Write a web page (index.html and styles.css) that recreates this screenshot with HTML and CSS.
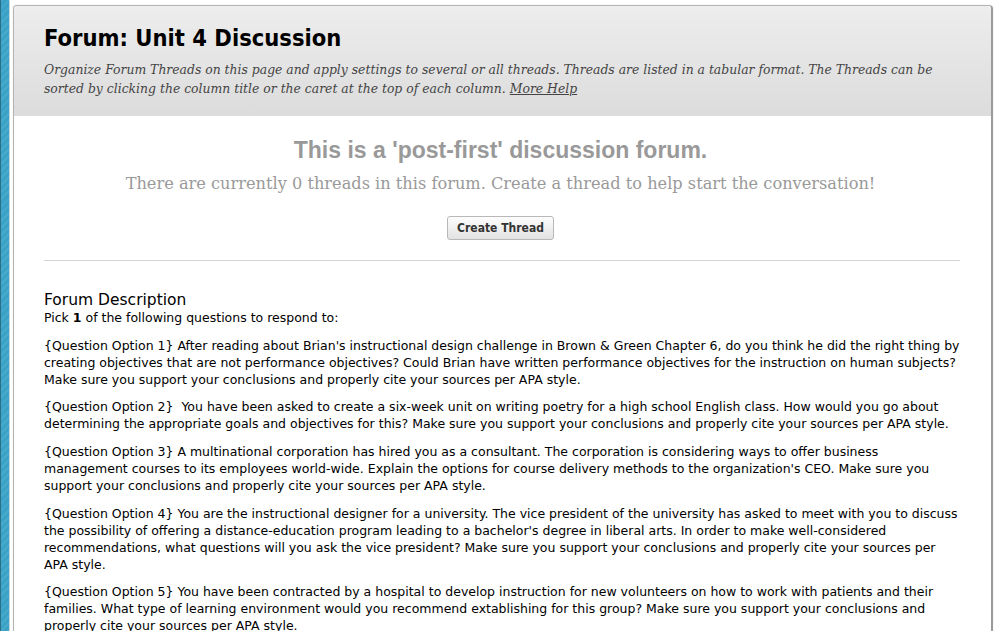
FILE: index.html
```html
<!DOCTYPE html>
<html lang="en">
<head>
    <meta charset="UTF-8">
    <title>Forum: Unit 4 Discussion</title>
    <link rel="stylesheet" href="styles.css">
</head>
<body>
    <div class="stripe"></div>
    <div class="panel">
        <div class="header">
            <h1>Forum: Unit 4 Discussion</h1>
            <p class="help">Organize Forum Threads on this page and apply settings to several or all threads. Threads are listed in a tabular format. The Threads can be sorted by clicking the column title or the caret at the top of each column. <a href="#">More Help</a></p>
        </div>

        <div class="content">
            <div class="empty">
                <h2>This is a 'post-first' discussion forum.</h2>
                <p>There are currently 0 threads in this forum. Create a thread to help start the conversation!</p>
                <button class="btn">Create Thread</button>
            </div>

            <div class="description">
                <h3>Forum Description</h3>
                <p class="pick">Pick <b>1</b> of the following questions to respond to:</p>
                <p>{Question Option 1} After reading about Brian's instructional design challenge in Brown &amp; Green Chapter 6, do you think he did the right thing by creating objectives that are not performance objectives? Could Brian have written performance objectives for the instruction on human subjects? Make sure you support your conclusions and properly cite your sources per APA style.</p>
                <p>{Question Option 2}&nbsp; You have been asked to create a six-week unit on writing poetry for a high school English class. How would you go about determining the appropriate goals and objectives for this? Make sure you support your conclusions and properly cite your sources per APA style.</p>
                <p>{Question Option 3} A multinational corporation has hired you as a consultant. The corporation is considering ways to offer business management courses to its employees world-wide. Explain the options for course delivery methods to the organization's CEO. Make sure you support your conclusions and properly cite your sources per APA style.</p>
                <p>{Question Option 4} You are the instructional designer for a university. The vice president of the university has asked to meet with you to discuss the possibility of offering a distance-education program leading to a bachelor's degree in liberal arts. In order to make well-considered recommendations, what questions will you ask the vice president? Make sure you support your conclusions and properly cite your sources per APA style.</p>
                <p>{Question Option 5} You have been contracted by a hospital to develop instruction for new volunteers on how to work with patients and their families. What type of learning environment would you recommend extablishing for this group? Make sure you support your conclusions and properly cite your sources per APA style.</p>
            </div>
        </div>
    </div>
</body>
</html>
```

FILE: styles.css
```css
body {
    margin: 0;
    background-color: #fff;
    font-family: "DejaVu Sans", sans-serif;
    display: flex;
    align-items: flex-start;
    height: 631px;
    overflow: hidden;
}

.stripe {
    width: 8px;
    height: 631px;
    flex-shrink: 0;
    border-left: 1px solid #2a6f88;
    border-right: 1px solid #c8d6dc;
    background-color: #39a2c6;
    background-image: repeating-linear-gradient(135deg, rgba(255, 255, 255, 0.08) 0 2px, transparent 2px 5px);
}

.panel {
    margin: 5px 0 0 3px;
    width: 977px;
    min-height: 700px;
    border: 1px solid #b4b4b4;
    border-right: 2px solid #9a9a9a;
    border-radius: 4px 4px 0 0;
    background-color: #fff;
    box-shadow: 0 0 2px rgba(0, 0, 0, 0.1);
}

.header {
    padding: 17px 30px 0 30px;
    height: 93px;
    background: linear-gradient(#ededed, #dcdcdc);
    border-radius: 4px 4px 0 0;
}

.header h1 {
    margin: 0;
    font-family: "DejaVu Sans Condensed", "DejaVu Sans", sans-serif;
    font-size: 23.5px;
    font-weight: bold;
    color: #000;
    line-height: 31px;
}

.help {
    margin: 6px 0 0 0;
    font-family: "DejaVu Serif", serif;
    font-style: italic;
    font-size: 12.4px;
    line-height: 19px;
    color: #444;
}

.help a {
    color: #444;
}

.content {
    padding: 0 28px 0 30px;
}

.empty {
    text-align: center;
    padding: 20px 3px 20px 0;
    border-bottom: 1px solid #d4d4d4;
    margin-right: 3px;
}

.empty h2 {
    margin: 0;
    font-family: "Liberation Sans", Arial, sans-serif;
    font-size: 23px;
    line-height: 28px;
    color: #999;
}

.empty p {
    margin: 8px 0 0 0;
    font-family: "DejaVu Serif", serif;
    font-size: 16.2px;
    line-height: 24px;
    color: #999;
}

.btn {
    margin-top: 20px;
    padding: 4px 9px;
    font-family: "DejaVu Sans Condensed", "DejaVu Sans", sans-serif;
    font-size: 12px;
    font-weight: bold;
    color: #333;
    background: linear-gradient(#fdfdfd, #e2e2e2);
    border: 1px solid #b8b8b8;
    border-radius: 3px;
    line-height: 14px;
}

.description {
    padding-top: 30px;
    font-size: 12.5px;
    line-height: 17px;
    color: #000;
}

.description h3 {
    margin: 0;
    font-size: 15.5px;
    font-weight: normal;
    line-height: 18px;
}

.description p {
    margin: 0 0 10.7px 0;
}
```
